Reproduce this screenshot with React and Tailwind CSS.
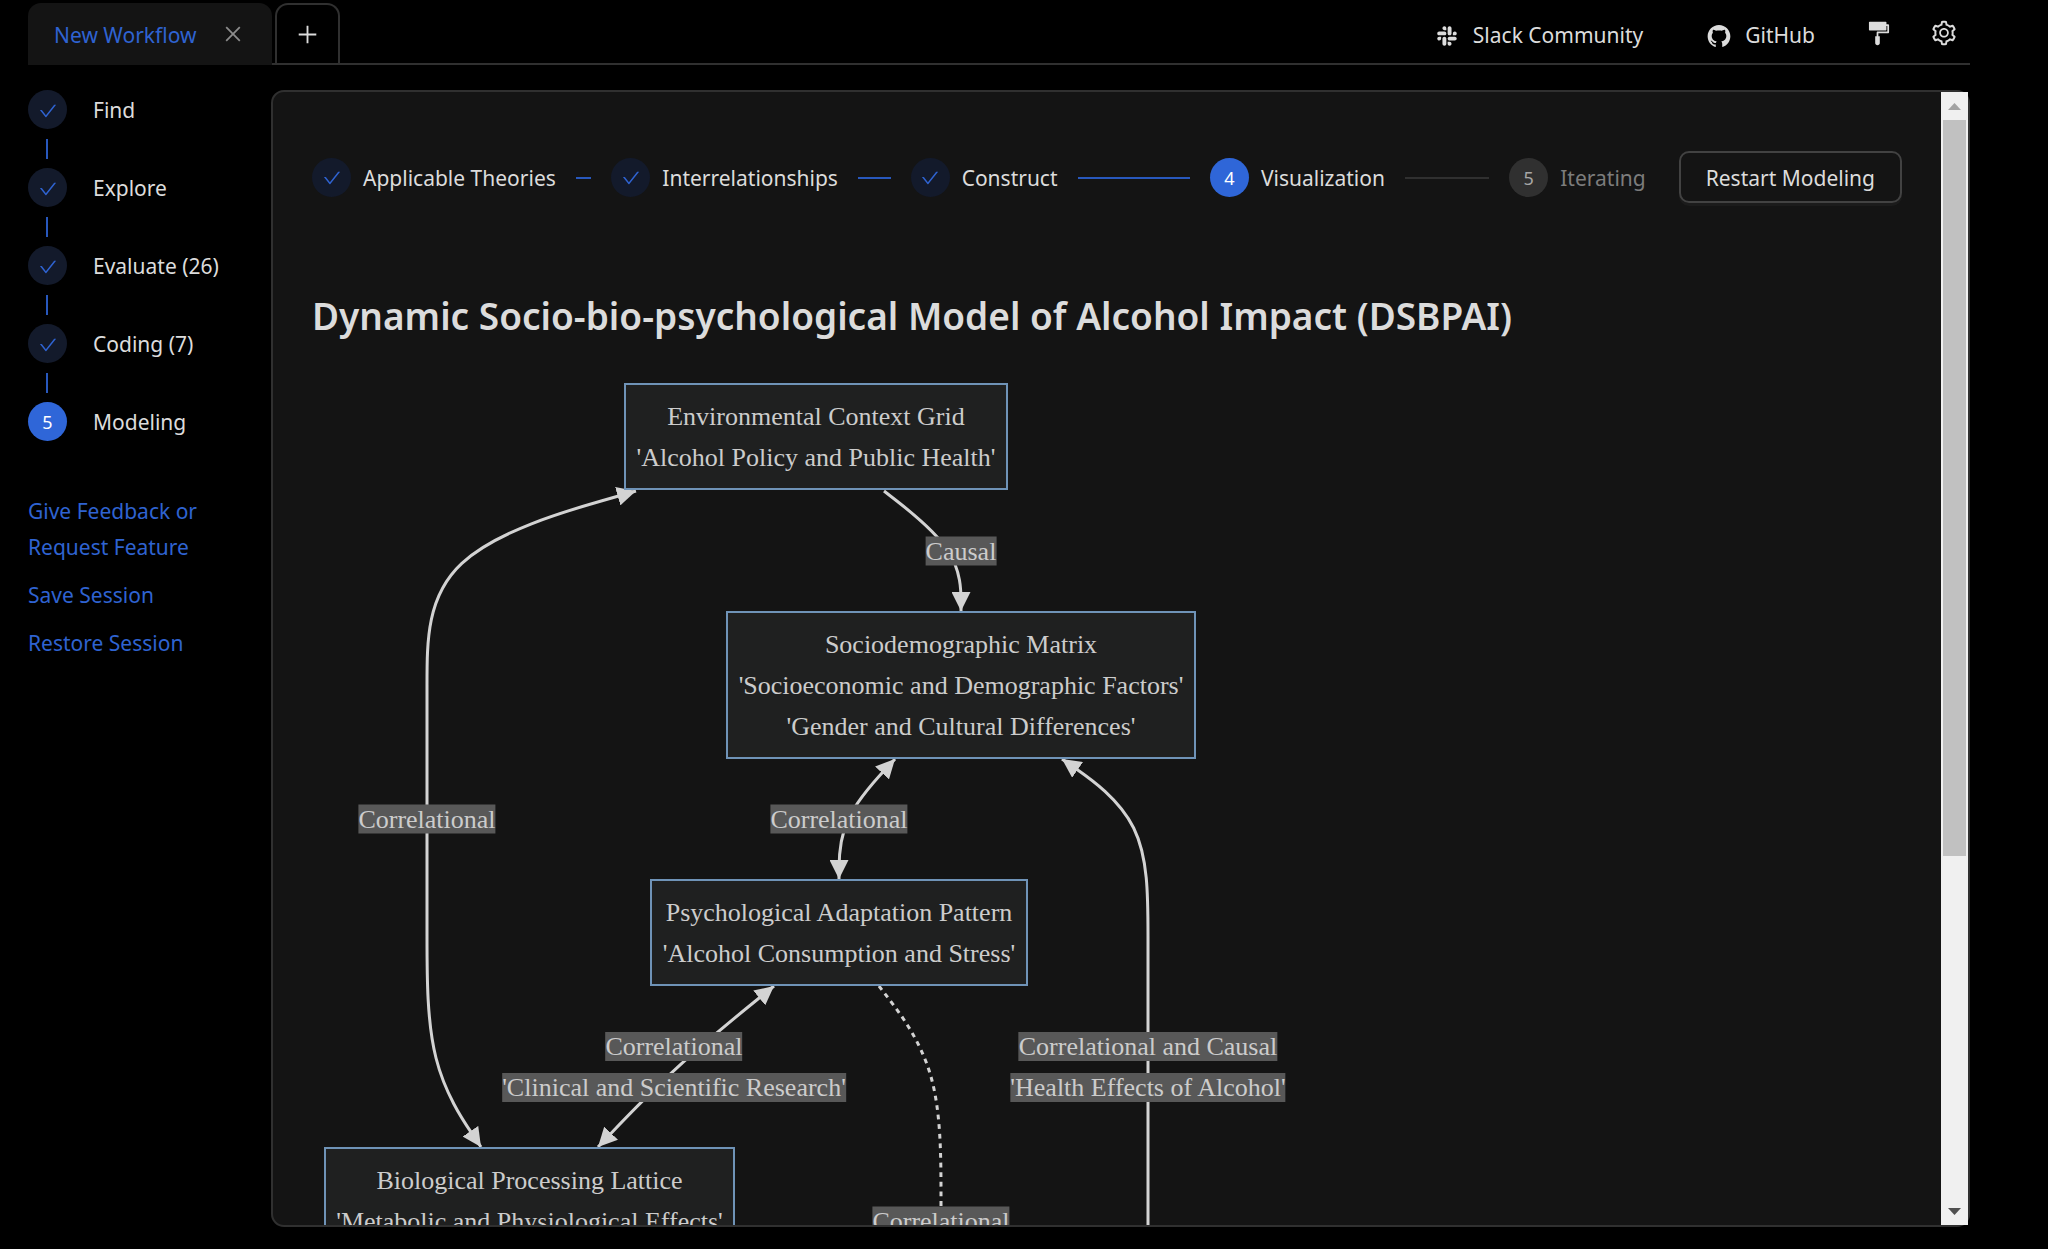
import React from "react";
import {
  AiOutlineCheck,
  AiOutlineClose,
  AiOutlinePlus,
  AiOutlineSetting,
  AiOutlineSlack,
  AiFillGithub,
  AiFillFormatPainter,
} from "react-icons/ai";

const workflowSteps = [
  { label: "Find", done: true },
  { label: "Explore", done: true },
  { label: "Evaluate (26)", done: true },
  { label: "Coding (7)", done: true },
  { label: "Modeling", done: false },
];

const modelingSteps = [
  { label: "Applicable Theories", state: "done" },
  { label: "Interrelationships", state: "done" },
  { label: "Construct", state: "done" },
  { label: "Visualization", state: "active" },
  { label: "Iterating", state: "waiting" },
];

const nodes = [
  { x: 312, y: 0, w: 384, lines: ["Environmental Context Grid", "'Alcohol Policy and Public Health'"] },
  {
    x: 414,
    y: 228,
    w: 470,
    lines: ["Sociodemographic Matrix", "'Socioeconomic and Demographic Factors'", "'Gender and Cultural Differences'"],
  },
  { x: 338, y: 496, w: 378, lines: ["Psychological Adaptation Pattern", "'Alcohol Consumption and Stress'"] },
  { x: 12, y: 764, w: 411, lines: ["Biological Processing Lattice", "'Metabolic and Physiological Effects'"] },
];

const edges = [
  { points: [[572, 108], [649, 168], [649, 228]], end: true },
  { points: [[324, 108], [115, 168], [115, 302], [115, 436], [115, 550], [115, 684], [169, 764]], start: true, end: true },
  { points: [[583, 376], [527, 436], [527, 496]], start: true, end: true },
  { points: [[750, 376], [836, 436], [836, 550], [836, 684], [836, 900]], start: true },
  { points: [[462, 603], [362, 684], [286, 764]], start: true, end: true },
  { points: [[567, 603], [629, 684], [629, 817], [629, 950]], dotted: true },
];

const edgeLabels = [
  { x: 649, y: 168, lines: ["Causal"] },
  { x: 115, y: 436, lines: ["Correlational"] },
  { x: 527, y: 436, lines: ["Correlational"] },
  { x: 362, y: 684, lines: ["Correlational", "'Clinical and Scientific Research'"] },
  { x: 836, y: 684, lines: ["Correlational and Causal", "'Health Effects of Alcohol'"] },
  { x: 629, y: 838, lines: ["Correlational"] },
];

// Cubic B-spline through a list of control points, clamped at both ends.
function basisPath(points) {
  const [first, second] = points;
  let [x0, y0] = first;
  let [x1, y1] = second;
  let d = `M${x0} ${y0}L${(5 * x0 + x1) / 6} ${(5 * y0 + y1) / 6}`;
  const rest = [...points.slice(2), points[points.length - 1]];
  rest.forEach(([x, y]) => {
    d += `C${(2 * x0 + x1) / 3} ${(2 * y0 + y1) / 3} ${(x0 + 2 * x1) / 3} ${(y0 + 2 * y1) / 3} ${(x0 + 4 * x1 + x) / 6} ${(y0 + 4 * y1 + y) / 6}`;
    x0 = x1;
    y0 = y1;
    x1 = x;
    y1 = y;
  });
  return `${d}L${x1} ${y1}`;
}

function StepCircle({ state, number }) {
  if (state === "done") {
    return (
      <span className="flex size-[39px] shrink-0 items-center justify-center rounded-full bg-[#131a2b] pt-[2px] text-[20px] text-[#2f63d1]">
        <AiOutlineCheck />
      </span>
    );
  }
  const tone = state === "active" ? "bg-[#2f66d8] text-white" : "bg-[#303030] text-[#a6a6a6]";
  return (
    <span className={`flex size-[39px] shrink-0 items-center justify-center rounded-full pt-[2px] text-[18px] ${tone}`}>
      {number}
    </span>
  );
}

function Header() {
  return (
    <header className="flex h-[65px] shrink-0 pt-[3px] text-[21px]">
      <div className="flex w-[244px] shrink-0 items-center justify-between rounded-t-[13px] bg-[#141414] pr-[28px] pl-[26px]">
        <button type="button" className="pt-1 whitespace-nowrap text-[#2f63d1]">New Workflow</button>
        <button type="button" aria-label="Close tab" className="text-[22px] text-[#8c8c8c]">
          <AiOutlineClose />
        </button>
      </div>
      <div className="flex flex-1 justify-between border-b-2 border-[#303030]">
        <button
          type="button"
          aria-label="Add tab"
          className="ml-[3px] flex w-[65px] items-center justify-center rounded-t-[13px] border-2 border-b-0 border-[#303030] text-[25px]"
        >
          <AiOutlinePlus />
        </button>
        <nav className="flex items-center pr-3">
          <a href="#slack" className="mr-[63px] flex items-center gap-[13px] pt-[6px]">
            <AiOutlineSlack className="text-[26px]" />
            Slack Community
          </a>
          <a href="#github" className="mr-[50px] flex items-center gap-[13px] pt-[6px]">
            <AiFillGithub className="text-[26px]" />
            GitHub
          </a>
          <button type="button" aria-label="Theme" className="mr-[37px] text-[28px]">
            <AiFillFormatPainter />
          </button>
          <button type="button" aria-label="Settings" className="text-[28px]">
            <AiOutlineSetting />
          </button>
        </nav>
      </div>
    </header>
  );
}

function Sidebar() {
  return (
    <aside className="w-[243px] shrink-0 text-[21px]">
      <ol>
        {workflowSteps.map((step, i) => (
          <li key={step.label}>
            <div className="flex h-[39px] items-center gap-[26px]">
              <StepCircle state={step.done ? "done" : "active"} number={i + 1} />
              <span className="pt-[2px]">{step.label}</span>
            </div>
            {i < workflowSteps.length - 1 && <div className="mt-[10px] mb-[9px] ml-[18px] h-5 w-[2px] bg-[#2858bd]" />}
          </li>
        ))}
      </ol>
      <div className="mt-[52px] flex w-[200px] flex-col gap-3 leading-9 text-[#2f63d1]">
        <a href="#feedback">Give Feedback or Request Feature</a>
        <a href="#save">Save Session</a>
        <a href="#restore">Restore Session</a>
      </div>
    </aside>
  );
}

function ModelingSteps() {
  return (
    <div className="flex items-center gap-[33px]">
      <ol className="flex flex-1">
        {modelingSteps.map((step, i) => {
          const last = i === modelingSteps.length - 1;
          return (
            <li key={step.label} className={last ? "flex items-center" : "flex flex-1 basis-0 items-center"}>
              <StepCircle state={step.state} number={i + 1} />
              <span className={`ml-3 pt-1 whitespace-nowrap ${step.state === "waiting" ? "text-[#7c7c7c]" : ""}`}>
                {step.label}
              </span>
              {!last && (
                <span className={`mx-5 mt-[2px] h-[2px] flex-1 ${step.state === "done" ? "bg-[#2858bd]" : "bg-[#303030]"}`} />
              )}
            </li>
          );
        })}
      </ol>
      <button
        type="button"
        className="h-[52px] rounded-[10px] border-2 border-[#424242] px-[25px] pt-1 whitespace-nowrap shadow-[0_3px_0_#1b1b1b]"
      >
        Restart Modeling
      </button>
    </div>
  );
}

function Diagram() {
  return (
    <div className="relative h-[1200px] w-[1000px] font-['Liberation_Serif',serif] text-[26px] text-[#cccccc]">
      <svg className="absolute inset-0 h-full w-full overflow-visible" fill="none" stroke="#d3d3d3" strokeWidth="3">
        <defs>
          <marker
            id="arrow"
            viewBox="0 0 10 10"
            refX="10"
            refY="5"
            markerWidth="19"
            markerHeight="19"
            markerUnits="userSpaceOnUse"
            orient="auto-start-reverse"
          >
            <path d="M0 0L10 5L0 10z" fill="#d3d3d3" stroke="none" />
          </marker>
        </defs>
        {edges.map((edge, i) => (
          <path
            key={i}
            d={basisPath(edge.points)}
            markerStart={edge.start ? "url(#arrow)" : undefined}
            markerEnd={edge.end ? "url(#arrow)" : undefined}
            strokeDasharray={edge.dotted ? "4.8 4.8" : undefined}
          />
        ))}
      </svg>
      {nodes.map((node) => (
        <div
          key={node.lines[0]}
          className="absolute border-2 border-[#6f93b7] bg-[#1f2020] pt-[11px] pb-[10px] text-center leading-[41px] whitespace-nowrap"
          style={{ left: node.x, top: node.y, width: node.w }}
        >
          {node.lines.map((line) => (
            <p key={line}>{line}</p>
          ))}
        </div>
      ))}
      {edgeLabels.map((label, i) => (
        <div
          key={i}
          className="absolute -translate-x-1/2 -translate-y-1/2 text-center leading-[41px] whitespace-nowrap"
          style={{ left: label.x, top: label.y }}
        >
          {label.lines.map((line) => (
            <p key={line}>
              <span className="bg-[#585858]">{line}</span>
            </p>
          ))}
        </div>
      ))}
    </div>
  );
}

function Scrollbar() {
  return (
    <div className="flex w-[27px] shrink-0 flex-col bg-[#f0f0f0]">
      <button type="button" aria-label="Scroll up" className="flex h-7 items-center justify-center">
        <svg width="13" height="7" viewBox="0 0 13 7" fill="#a3a3a3"><path d="M0 7L6.500 0L13 7z" /></svg>
      </button>
      <div className="mx-[2px] flex flex-1 flex-col">
        <div className="flex-[28] bg-[#c1c1c1]" />
        <div className="flex-[13]" />
      </div>
      <button type="button" aria-label="Scroll down" className="flex h-7 items-center justify-center">
        <svg width="13" height="7" viewBox="0 0 13 7" fill="#505050"><path d="M0 0L6.500 7L13 0z" /></svg>
      </button>
    </div>
  );
}

export default function App() {
  return (
    <div className="flex h-screen flex-col overflow-hidden bg-black pr-[78px] pb-[22px] pl-7 font-['Noto_Sans',sans-serif] text-[#dcdcdc]">
      <Header />
      <div className="flex min-h-0 flex-1 pt-[25px]">
        <Sidebar />
        <main className="flex min-w-0 flex-1 rounded-[13px] border-2 border-[#303030] bg-[#141414]">
          <div className="min-w-0 flex-1 overflow-hidden pt-[59px] pr-[39px] pl-[39px] text-[21px]">
            <ModelingSteps />
            <h1 className="mt-[88px] mb-[43px] text-[37px] leading-[49px] font-semibold whitespace-nowrap">
              Dynamic Socio-bio-psychological Model of Alcohol Impact (DSBPAI)
            </h1>
            <Diagram />
          </div>
          <Scrollbar />
        </main>
      </div>
    </div>
  );
}
